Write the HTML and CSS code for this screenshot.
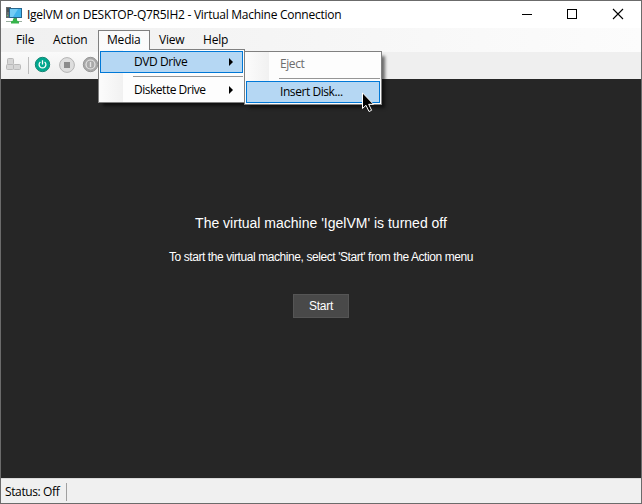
FILE: index.html
```html
<!DOCTYPE html>
<html lang="en">
<head>
<meta charset="utf-8">
<title>IgelVM on DESKTOP-Q7R5IH2 - Virtual Machine Connection</title>
<link rel="stylesheet" href="styles.css">
</head>
<body>
<div class="window">
  <header class="titlebar">
    <svg class="app-icon" width="18" height="18" viewBox="0 0 18 18">
      <path d="M0 1h5v11H0z" fill="#666b6e"/><path d="M1 3h3M1 5h2" stroke="#30363a"/><path d="M1 9h1v1H1z" fill="#4bd267"/>
      <path d="M3 2h13v10H3z" fill="#24668f"/><path d="M4 3h11v8H4z" fill="#42b4ed"/><path d="M4 3h8l-5 8H4z" fill="#75ccf5"/>
      <path d="M8 12h3v2H8z" fill="#647078"/><path d="M0 15h16v1H0z" fill="#9aaea0"/><path d="M7 12.500h4v2l2 1v2H5v-2l2-1z" fill="#36b44b"/>
    </svg>
    <span class="title">IgelVM on DESKTOP-Q7R5IH2 - Virtual Machine Connection</span>
    <svg class="controls" width="138" height="27" viewBox="0 0 138 27" fill="none" stroke="#000" shape-rendering="crispEdges">
      <path d="M19 13.500h10"/><path d="M64.500 8.500h9v9h-9z"/><path d="M110 8l10 10M120 8l-10 10" shape-rendering="auto" stroke-width="1.100"/>
    </svg>
  </header>
  <nav class="menubar">
    <span class="menu-item file">File</span>
    <span class="menu-item action">Action</span>
    <div class="menu-item media">Media
      <div class="dropdown">
        <div class="row selected"><span class="dvd">DVD Drive</span><i class="arrow"></i></div>
        <div class="separator"></div>
        <div class="row"><span class="diskette">Diskette Drive</span><i class="arrow"></i></div>
      </div>
      <div class="dropdown submenu">
        <div class="row disabled"><span class="eject">Eject</span></div>
        <div class="separator"></div>
        <div class="row selected"><span class="insert">Insert Disk...</span></div>
        <svg class="cursor" width="13" height="21" viewBox="0 0 13 21"><path d="M.5.8v15.700l3.500-3.200 3 6.200 2.600-1.200-2.900-6h4.800z" fill="#000" stroke="#fff"/></svg>
      </div>
    </div>
    <span class="menu-item view">View</span>
    <span class="menu-item help">Help</span>
  </nav>
  <div class="toolbar">
    <svg width="100" height="27" viewBox="0 0 100 27">
      <g fill="#d6d6d6" stroke="#b9b9b9"><rect x="6.500" y="6.500" width="6" height="6" rx="1"/><rect x="5.500" y="12.500" width="7" height="5" rx="1"/><rect x="12.500" y="12.500" width="7" height="5" rx="1"/></g>
      <path d="M27.500 5v17" stroke="#bdbdbd"/>
      <circle cx="41.500" cy="12.500" r="7.200" fill="#00a78e" stroke="#168674"/>
      <path d="M39.400 9.900a3.400 3.400 0 1 0 4.200 0M41.500 8.200v4.300" fill="none" stroke="#fff" stroke-width="1.300"/>
      <circle cx="66" cy="13" r="7.400" fill="#dedede" stroke="#b4b4b4"/><path d="M63 10h6v6h-6z" fill="#8b8b8b"/>
      <circle cx="89.500" cy="12.500" r="7.200" fill="#a9a9a9" stroke="#969696"/><circle cx="89.500" cy="12.500" r="4.500" fill="none" stroke="#e4e4e4" stroke-width="1.200"/><path d="M89.500 10v5" stroke="#e4e4e4" stroke-width="1.400"/>
    </svg>
  </div>
  <main class="screen">
    <h1><span>The virtual machine 'IgelVM' is turned off</span></h1>
    <p><span>To start the virtual machine, select 'Start' from the Action menu</span></p>
    <button><span>Start</span></button>
  </main>
  <footer class="status"><span>Status: Off</span></footer>
</div>
</body>
</html>
```
FILE: styles.css
```css
* { box-sizing: border-box; }
body { margin: 0; font: 12px/16px "Open Sans", "Noto Sans", sans-serif; color: #000; overflow: hidden; }
.window { width: 642px; height: 504px; border: 1px solid #6b6b6b; display: flex; flex-direction: column; background: #f0f0f0; }
.titlebar { height: 27px; background: #fff; display: flex; align-items: center; flex: none; }
.app-icon { margin: 0 3px 0 5px; }
.title { white-space: nowrap; letter-spacing: -.265px; flex: 1; }
.controls { flex: none; }
.menubar { height: 24px; flex: none; display: flex; background: linear-gradient(90deg, #f0f0f0, #fcfcfc); padding: 2px 0 2px 6px; }
.menu-item { height: 20px; line-height: 20px; padding-left: 9px; white-space: nowrap; letter-spacing: -.2px; flex: none; }
.file { width: 37px; }
.action { width: 54px; letter-spacing: -.1px; }
.media { width: 52px; height: 21px; position: relative; border: 1px solid #808080; border-bottom: 0; background: linear-gradient(#fafafa, #fcfcfc); padding-left: 8px; line-height: 18px; z-index: 2; }
.view { width: 44px; }
.dropdown { position: absolute; left: -1px; top: 18px; width: 147px; height: 54px; padding: 1px; border: 1px solid #808080; background: linear-gradient(90deg, #fcfcfc 0, #f1f1f1 24px, #fdfdfd 24px); box-shadow: 4px 4px 3px -1px rgba(0,0,0,.55); }
.dropdown::before { content: ""; position: absolute; left: 0; top: -1px; width: 50px; height: 1px; background: #fbfbfb; }
.submenu { left: 145px; top: 20px; width: 138px; }
.submenu::before { display: none; }
.row { height: 22px; padding: 0 9px 0 33px; display: flex; align-items: center; justify-content: space-between; border: 1px solid transparent; line-height: 18px; }
.row.selected { background: #b5d7f3; border-color: #0078d7; }
.disabled { color: #6d6d6d; }
.dvd, .eject, .insert { letter-spacing: -.43px; }
.diskette { letter-spacing: -.48px; }
.separator { height: 1px; margin: 3px 0 2px 33px; background: #969696; }
.arrow { border: 4px solid transparent; border-left-color: #000; border-right: 0; width: 4px; height: 8px; }
.cursor { position: absolute; left: 117px; top: 40px; }
.toolbar { height: 27px; flex: none; background: linear-gradient(90deg, transparent 150px, #efefef 380px), linear-gradient(#fafafa, #eee); }
.toolbar svg { display: block; }
.screen { height: 399px; flex: none; background: #262626; color: #fff; display: flex; flex-direction: column; align-items: center; font-family: "Liberation Sans", Arial, sans-serif; }
h1 { font-size: 14px; font-weight: 400; line-height: 18px; margin: 135px 0 0; letter-spacing: 0; }
p { margin: 17px 0 0; line-height: 16px; letter-spacing: -.42px; }
button { width: 56px; height: 24px; margin-top: 29px; padding: 0; border: 1px solid #555; background: #494949; color: #fff; font: 12px/16px "Liberation Sans", Arial, sans-serif; letter-spacing: -.25px; }
.status { flex: 1; display: flex; align-items: center; border-top: 1px solid #dadada; padding: 1px 0 0 4px; letter-spacing: -.38px; }
.status span { width: 62px; height: 18px; line-height: 18px; border-right: 1px solid #a0a0a0; white-space: nowrap; }
```
